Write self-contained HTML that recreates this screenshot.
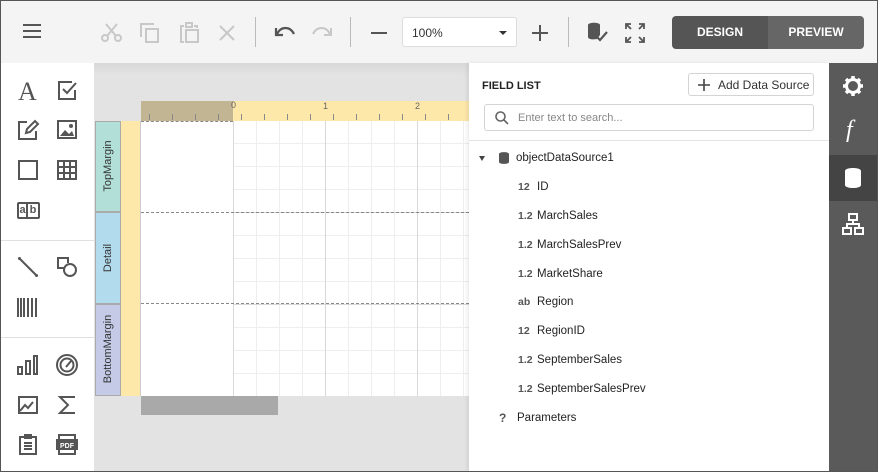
<!DOCTYPE html>
<html><head><style>
*{margin:0;padding:0;box-sizing:border-box}
body{width:878px;height:472px;overflow:hidden;font-family:"Liberation Sans",sans-serif;background:#fff;position:relative}
.a{position:absolute}
.frame{left:0;top:0;width:878px;height:472px;border:1px solid #555;z-index:50;pointer-events:none}
.tb{left:0;top:0;width:878px;height:63px;background:#f4f4f4}
svg{position:absolute;overflow:visible}
.sep{width:1px;height:30px;background:#bbb;top:17px}
.lp{left:1px;top:63px;width:93px;height:409px;background:#fff}
.cv{left:94px;top:63px;width:375px;height:409px;background:#e3e3e3}
.fl{left:469px;top:63px;width:360px;height:409px;background:#fff}
.rb{left:829px;top:63px;width:48px;height:409px;background:#5a5a5a}
.row{position:absolute;left:0;font-size:11.5px;line-height:14px;color:#222}
.ty{position:absolute;left:49px;top:0;line-height:14px;font-size:10.5px;font-weight:bold;color:#555}
.nm{position:absolute;left:68px;top:0;white-space:nowrap}
</style></head><body>
<div class="a tb"></div>
<svg style="left:23px;top:24px" width="18" height="14"><path d="M0 1H18M0 7H18M0 13H18" stroke="#555" stroke-width="2"/></svg>
<svg style="left:101px;top:23px" width="22" height="20" fill="none" stroke="#c8c8c8" stroke-width="2"><circle cx="4" cy="15" r="3"/><circle cx="17" cy="15" r="3"/><path d="M6 13L16 1M15 13L5 1"/></svg>
<svg style="left:140px;top:23px" width="20" height="20" fill="none" stroke="#c8c8c8" stroke-width="2"><path d="M1 14V1H14"/><rect x="6" y="6" width="12" height="13"/></svg>
<svg style="left:180px;top:22px" width="20" height="21" fill="none" stroke="#c8c8c8" stroke-width="2"><path d="M4 4H1V20H4M14 4H17V6"/><rect x="6" y="1" width="6" height="4"/><rect x="6" y="8" width="12" height="12"/></svg>
<svg style="left:219px;top:25px" width="16" height="16"><path d="M1 1L15 15M15 1L1 15" stroke="#c8c8c8" stroke-width="2"/></svg>
<div class="a sep" style="left:255px"></div>
<svg style="left:275px;top:26px" width="20" height="12" fill="none" stroke="#555" stroke-width="2.2"><path d="M2 8C6 0 15 0 19 8M1 2V9H8"/></svg>
<svg style="left:312px;top:26px" width="20" height="12" fill="none" stroke="#c8c8c8" stroke-width="2"><path d="M1 8C5 0 14 0 18 8M19 2V9H12"/></svg>
<div class="a sep" style="left:350px"></div>
<svg style="left:371px;top:32px" width="16" height="2"><path d="M0 1H16" stroke="#555" stroke-width="2"/></svg>
<div class="a" style="left:402px;top:17px;width:115px;height:30px;background:#fff;border:1px solid #ddd;border-radius:3px;font-size:12px;color:#333;padding:8px 0 0 9px">100%<span style="position:absolute;right:9px;top:13px;border-left:4px solid transparent;border-right:4px solid transparent;border-top:4px solid #333"></span></div>
<svg style="left:532px;top:25px" width="16" height="16"><path d="M8 0V16M0 8H16" stroke="#555" stroke-width="2"/></svg>
<div class="a sep" style="left:568px"></div>
<svg style="left:587px;top:22px" width="24" height="22"><path d="M1 3C1 0 13 0 13 3V13L10 17C5 18 1 17 1 15Z" fill="#555"/><path d="M9 14L13 18L20 10" fill="none" stroke="#555" stroke-width="2.2"/></svg>
<svg style="left:625px;top:23px" width="20" height="20" fill="none" stroke="#555" stroke-width="1.8"><path d="M1 6V1H6M1 1L6 6M14 1H19V6M19 1L14 6M1 14V19H6M1 19L6 14M19 14V19H14M19 19L14 14"/></svg>
<div class="a" style="left:672px;top:16px;width:192px;height:33px;border-radius:4px;overflow:hidden;font-size:12px;font-weight:bold;color:#fff">
<div class="a" style="left:0;top:0;width:96px;height:33px;background:#555;text-align:center;line-height:33px">DESIGN</div>
<div class="a" style="left:96px;top:0;width:96px;height:33px;background:#666;text-align:center;line-height:33px">PREVIEW</div></div>

<div class="a lp"></div>
<div class="a" style="left:1px;top:240px;width:93px;height:1px;background:#e0e0e0"></div>
<div class="a" style="left:1px;top:337px;width:93px;height:1px;background:#e0e0e0"></div>
<div class="a" style="left:18px;top:77px;font-family:'Liberation Serif',serif;font-size:26px;color:#555">A</div>
<svg style="left:58px;top:81px" width="20" height="20" fill="none" stroke="#555" stroke-width="2"><path d="M17 9V18H1V1H14"/><path d="M5 8L9 12L18 2"/></svg>
<svg style="left:18px;top:120px" width="22" height="20" fill="none" stroke="#555" stroke-width="2"><path d="M9 2H1V19H18V11"/><path d="M8 13L9 9L17 1L20 4L12 12Z"/></svg>
<svg style="left:57px;top:120px" width="20" height="19"><rect x="1" y="1" width="18" height="17" fill="none" stroke="#555" stroke-width="2"/><path d="M3 16L8 10L12 14L15 11L17 16Z" fill="#555"/><circle cx="14" cy="6" r="2" fill="#555"/></svg>
<svg style="left:18px;top:160px" width="20" height="20"><rect x="1" y="1" width="18" height="18" fill="none" stroke="#555" stroke-width="2"/></svg>
<svg style="left:57px;top:160px" width="20" height="20" fill="none" stroke="#555" stroke-width="2"><rect x="1" y="1" width="18" height="18"/><path d="M7 1V19M13 1V19M1 7H19M1 13H19"/></svg>
<div class="a" style="left:17px;top:202px;width:23px;height:17px;border:2px solid #555;border-radius:2px;font-size:11px;font-weight:bold;color:#555;display:flex"><span style="width:9px;text-align:center;border-right:2px solid #555">a</span><span style="width:10px;text-align:center">b</span></div>
<svg style="left:18px;top:257px" width="20" height="20"><path d="M1 1L19 19" stroke="#555" stroke-width="2"/><circle cx="1.5" cy="1.5" r="1.5" fill="#555"/><circle cx="18.5" cy="18.5" r="1.5" fill="#555"/></svg>
<svg style="left:57px;top:257px" width="21" height="21" fill="none" stroke="#555" stroke-width="2"><path d="M8 11H1V1H11V6"/><circle cx="13" cy="13" r="6"/></svg>
<svg style="left:17px;top:298px" width="22" height="19"><path d="M1 0V19M4 0V19M7 0V19M11 0V19M15 0V19M19 0V19" stroke="#555" stroke-width="2"/></svg>
<svg style="left:17px;top:355px" width="22" height="20" fill="none" stroke="#555" stroke-width="2"><rect x="1" y="12" width="4" height="7"/><rect x="9" y="6" width="4" height="13"/><rect x="17" y="1" width="3" height="18"/></svg>
<svg style="left:56px;top:354px" width="22" height="22" fill="none" stroke="#555" stroke-width="2"><circle cx="11" cy="11" r="10"/><circle cx="11" cy="11" r="6.5"/><path d="M10 13L15 7"/></svg>
<svg style="left:18px;top:396px" width="20" height="18" fill="none" stroke="#555" stroke-width="2"><rect x="1" y="1" width="18" height="16"/><path d="M2 15L7 9L10 12L15 6"/></svg>
<svg style="left:58px;top:395px" width="18" height="20" fill="none" stroke="#555" stroke-width="2"><path d="M17 2H2L10 10L2 18H17"/></svg>
<svg style="left:19px;top:434px" width="18" height="21" fill="none" stroke="#555" stroke-width="2"><path d="M5 3H1V20H17V3H13"/><rect x="6" y="1" width="6" height="3" fill="#555"/><path d="M5 9H13M5 12H13M5 15H13"/></svg>
<svg style="left:56px;top:434px" width="22" height="21"><path d="M3 5V1H19V5M3 16V20H19V16" fill="none" stroke="#555" stroke-width="2"/><rect x="0" y="5" width="22" height="11" fill="#555"/><text x="11" y="14" font-size="7" font-weight="bold" fill="#fff" text-anchor="middle" font-family="Liberation Sans">PDF</text></svg>

<div class="a cv" style="background:linear-gradient(#d8d8d8,#e3e3e3 12px)"></div>
<div class="a" style="left:141px;top:101px;width:92px;height:20px;background:#c2b594"></div>
<div class="a" style="left:233px;top:101px;width:236px;height:20px;background:#fde7a9"></div>
<div class="a" style="left:141px;top:114px;width:328px;height:6px;background:repeating-linear-gradient(90deg,transparent 0 10px,#888 10px 11px,transparent 11px 23px);background-position:-2px 0"></div>
<div class="a" style="left:231px;top:100px;font-size:9px;color:#666">0</div>
<div class="a" style="left:323px;top:101px;font-size:9px;color:#666">1</div>
<div class="a" style="left:415px;top:101px;font-size:9px;color:#666">2</div>
<div class="a" style="left:95px;top:121px;width:26px;height:91px;background:#b2e0d9;border:1px solid #aaa"></div>
<div class="a" style="left:95px;top:212px;width:26px;height:92px;background:#b2dbee;border:1px solid #aaa"></div>
<div class="a" style="left:95px;top:304px;width:26px;height:92px;background:#c5cbe7;border:1px solid #aaa"></div>
<div class="a" style="left:121px;top:121px;width:20px;height:275px;background:#fde7a9;border-right:1px solid #ccc"></div>
<div class="a" style="left:108px;top:166px;transform:translate(-50%,-50%) rotate(-90deg);font-size:11px;color:#333;white-space:nowrap">TopMargin</div>
<div class="a" style="left:108px;top:258px;transform:translate(-50%,-50%) rotate(-90deg);font-size:11px;color:#333;white-space:nowrap">Detail</div>
<div class="a" style="left:108px;top:349px;transform:translate(-50%,-50%) rotate(-90deg);font-size:11px;color:#333;white-space:nowrap">BottomMargin</div>
<div class="a" style="left:141px;top:121px;width:328px;height:275px;background:#fff"></div>
<div class="a" style="left:233px;top:121px;width:236px;height:275px;background-image:linear-gradient(90deg,#d8d8d8 1px,transparent 1px),linear-gradient(#d8d8d8 1px,transparent 1px),linear-gradient(90deg,#eee 1px,transparent 1px),linear-gradient(#eee 1px,transparent 1px);background-size:92px 92px,92px 92px,23px 23px,23px 23px;background-position:0 0,0 -1px,0 0,0 -1px"></div>
<div class="a" style="left:141px;top:212px;width:328px;border-top:1px dashed #888"></div>
<div class="a" style="left:141px;top:303px;width:328px;border-top:1px dashed #888"></div>
<div class="a" style="left:141px;top:121px;width:92px;border-top:1px dashed #888"></div>
<div class="a" style="left:141px;top:396px;width:137px;height:19px;background:#a9a9a9"></div>

<div class="a fl" style="box-shadow:-2px 0 4px rgba(0,0,0,.08)">
<div class="a" style="left:13px;top:17px;font-size:11px;font-weight:bold;color:#222">FIELD LIST</div>
<div class="a" style="left:219px;top:10px;width:126px;height:23px;border:1px solid #d4d4d4;border-radius:3px;font-size:12px;color:#333;padding:4px 0 0 29px">Add Data Source
<svg style="left:9px;top:5px" width="12" height="12"><path d="M6 0V12M0 6H12" stroke="#444" stroke-width="1.6"/></svg></div>
<div class="a" style="left:15px;top:41px;width:330px;height:27px;border:1px solid #d4d4d4;border-radius:3px;font-size:11px;color:#888;padding:7px 0 0 33px">Enter text to search...
<svg style="left:10px;top:6px" width="14" height="14" fill="none" stroke="#666" stroke-width="1.6"><circle cx="5.5" cy="5.5" r="4.5"/><path d="M9 9L13 13"/></svg></div>
<div class="a" style="left:0;top:77px;width:360px;height:1px;background:#e4e4e4"></div>
<div class="row" style="top:88px;width:360px"><span class="a" style="left:10px;top:5px;border-left:3.5px solid transparent;border-right:3.5px solid transparent;border-top:5px solid #444"></span>
<svg style="left:30px;top:1px" width="10" height="12"><path d="M0 2C0-0.5 10-0.5 10 2V10C10 12.5 0 12.5 0 10Z" fill="#555"/></svg><span class="a" style="left:47px;top:0;white-space:nowrap">objectDataSource1</span></div>
<div class="row" style="top:117px"><span class="ty">12</span><span class="nm">ID</span></div>
<div class="row" style="top:146px"><span class="ty">1.2</span><span class="nm">MarchSales</span></div>
<div class="row" style="top:175px"><span class="ty">1.2</span><span class="nm">MarchSalesPrev</span></div>
<div class="row" style="top:204px"><span class="ty">1.2</span><span class="nm">MarketShare</span></div>
<div class="row" style="top:232px"><span class="ty">ab</span><span class="nm">Region</span></div>
<div class="row" style="top:261px"><span class="ty">12</span><span class="nm">RegionID</span></div>
<div class="row" style="top:290px"><span class="ty">1.2</span><span class="nm">SeptemberSales</span></div>
<div class="row" style="top:319px"><span class="ty">1.2</span><span class="nm">SeptemberSalesPrev</span></div>
<div class="row" style="top:348px"><span class="ty" style="left:30px;font-size:12px">?</span><span class="nm" style="left:48px">Parameters</span></div>
</div>

<div class="a rb"></div>
<div class="a" style="left:829px;top:155px;width:48px;height:46px;background:#444"></div>
<svg style="left:843px;top:76px" width="20" height="20"><circle cx="10" cy="10" r="6.5" fill="none" stroke="#fff" stroke-width="3"/><path d="M10 0V20M0 10H20M3 3L17 17M17 3L3 17" stroke="#fff" stroke-width="3.5" stroke-dasharray="3.5 13 3.5 0"/><circle cx="10" cy="10" r="2.3" fill="#5a5a5a"/></svg>
<div class="a" style="left:846px;top:117px;font-family:'Liberation Serif',serif;font-style:italic;font-size:24px;color:#fff">f</div>
<svg style="left:845px;top:168px" width="16" height="20"><path d="M0 3C0-1 16-1 16 3V17C16 21 0 21 0 17Z" fill="#fff"/></svg>
<svg style="left:842px;top:213px" width="22" height="22" fill="none" stroke="#fff" stroke-width="2"><rect x="7" y="1" width="8" height="6"/><rect x="1" y="15" width="8" height="6"/><rect x="13" y="15" width="8" height="6"/><path d="M11 7V11M5 15V11H17V15"/></svg>
<div class="a frame"></div>
</body></html>
